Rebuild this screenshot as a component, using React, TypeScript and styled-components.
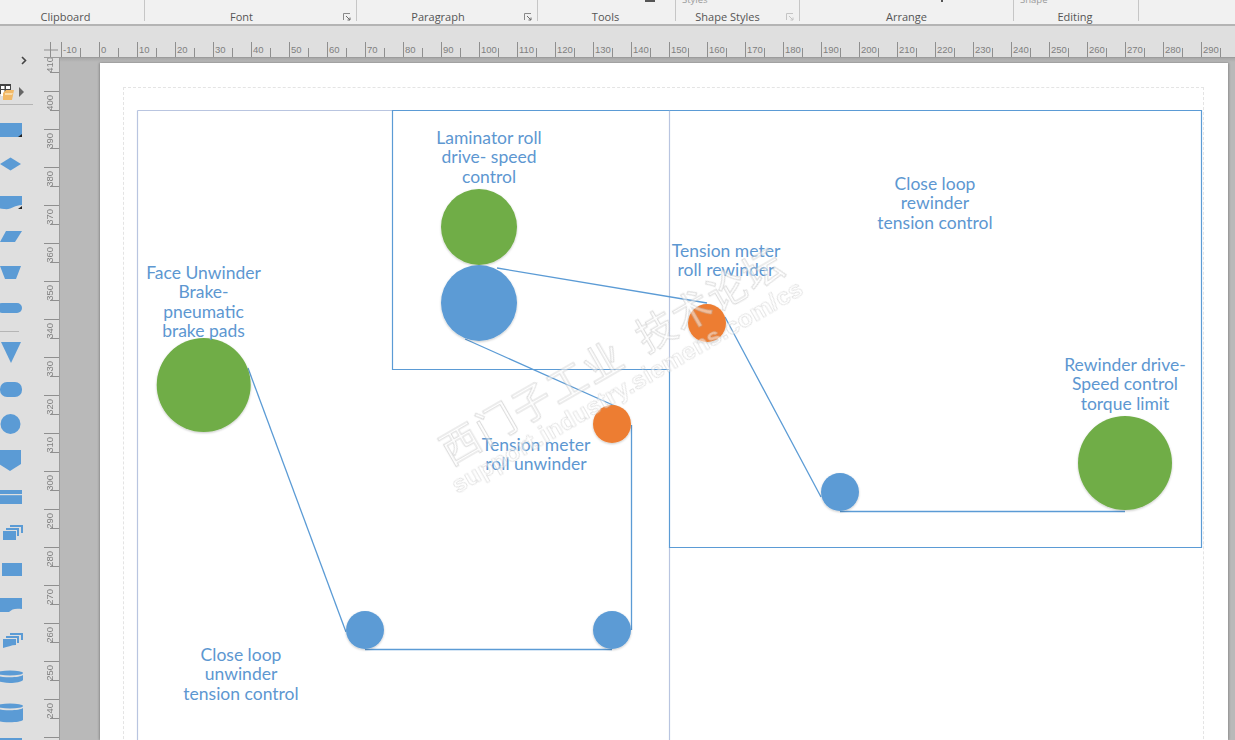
import React from "react";
import styled, { createGlobalStyle } from "styled-components";

const Global = createGlobalStyle`
  html, body { margin: 0; padding: 0; background: #dfdfdf; }
  body { width: 1235px; height: 740px; overflow: hidden; font-family: "Liberation Sans", Arial, sans-serif; }
`;

const Screen = styled.div`
  width: 1235px;
  height: 740px;
  display: flex;
  flex-direction: column;
  overflow: hidden;
`;

const Ribbon = styled.div`
  flex: none;
  height: 24px;
  display: flex;
  background: #f1f1f1;
  border-bottom: 2px solid #b4b4b4;
`;

const RibbonGroup = styled.div<{ $w: number; $pad: number }>`
  flex: none;
  box-sizing: border-box;
  width: ${(p) => p.$w}px;
  height: 21px;
  padding-right: ${(p) => p.$pad}px;
  position: relative;
  border-right: 1px solid #c6c6c6;
  text-align: center;
  font: 11px/34px "Open Sans", sans-serif;
  color: #555;
`;

const Launcher = styled.svg`
  position: absolute;
  right: 5px;
  bottom: 0;
`;

const CutOff = styled.span`
  position: absolute;
  left: 6px;
  top: -6px;
  font: 9.5px/12px "Open Sans", sans-serif;
  color: #9a9a9a;
`;

const Notch = styled.span<{ $right: number; $w: number }>`
  position: absolute;
  top: 0;
  right: ${(p) => p.$right}px;
  width: ${(p) => p.$w}px;
  height: 2px;
  background: #555;
`;

const Body = styled.div`
  flex: 1;
  min-height: 0;
  display: flex;
`;

const Palette = styled.div`
  flex: none;
  width: 44px;
  background: #dfdfdf;
  overflow: hidden;
`;

const PaletteTop = styled.div`
  height: 79px;
  box-sizing: border-box;
  padding-top: 30px;
  margin-right: 11px;
  border-bottom: 1px solid #b5b5b5;
`;

const Chevron = styled.svg`
  display: block;
  margin-left: 21px;
`;

const OpenIcon = styled.svg`
  display: block;
  margin-top: 19px;
`;

const PaletteList = styled.div`
  display: flex;
  flex-direction: column;
  padding-top: 9px;
`;

const PaletteItem = styled.svg<{ $h: number }>`
  display: block;
  flex: none;
  width: 44px;
  height: ${(p) => p.$h}px;
  overflow: visible;
  filter: blur(0.35px);
`;

const PaletteRule = styled.div`
  flex: none;
  width: 19px;
  height: 1px;
  background: #b5b5b5;
`;

const Main = styled.div`
  flex: 1;
  min-width: 0;
  display: flex;
  flex-direction: column;
`;

const RulerBand = styled.div`
  flex: none;
  height: 32px;
  box-sizing: border-box;
  padding-top: 16px;
  display: flex;
  background: #dfdfdf;
  border-bottom: 1px solid #9c9c9c;
`;

const RulerCorner = styled.svg`
  flex: none;
  display: block;
  width: 17px;
  height: 15px;
`;

const HCell = styled.div`
  flex: none;
  width: 38px;
  height: 15px;
  box-sizing: border-box;
  border-left: 1px solid #8f8f8f;
  position: relative;
  padding: 2px 0 0 1px;
  font: 9.5px/11px "Liberation Sans", sans-serif;
  color: #808080;
  &::after {
    content: "";
    position: absolute;
    left: 18px;
    bottom: 0;
    width: 1px;
    height: 9px;
    background: #8f8f8f;
  }
`;

const Work = styled.div`
  flex: 1;
  min-height: 0;
  display: flex;
`;

const VRuler = styled.div`
  flex: none;
  width: 15px;
  background: #dfdfdf;
  border-right: 1px solid #9c9c9c;
  overflow: hidden;
`;

const VCell = styled.div<{ $first?: boolean }>`
  width: 15px;
  height: 38px;
  box-sizing: border-box;
  border-top: 1px solid #8f8f8f;
  margin-top: ${(p) => (p.$first ? "-5px" : "0")};
  position: relative;
  &::after {
    content: "";
    position: absolute;
    right: 0;
    top: 18px;
    width: 9px;
    height: 1px;
    background: #8f8f8f;
  }
`;

const VLabel = styled.span`
  position: absolute;
  left: 0;
  top: 3px;
  writing-mode: vertical-rl;
  transform: rotate(180deg);
  font: 9.5px/11px "Liberation Sans", sans-serif;
  color: #808080;
`;

const Desk = styled.div`
  flex: 1;
  min-width: 0;
  box-sizing: border-box;
  padding: 5px 7px 0 40px;
  background: linear-gradient(180deg, #a8a8a8 0, #b9b9b9 4px);
`;

const Page = styled.div`
  height: 100%;
  position: relative;
  background: #fff;
  box-shadow: -1px 0 2px #8f8f8f, 1px 0 2px #8f8f8f;
  overflow: hidden;
`;

const Margin = styled.div`
  position: absolute;
  left: 23px;
  top: 24px;
  right: 24px;
  height: 700px;
  border: 1px dashed #e4e4e4;
`;

const Drawing = styled.svg`
  position: absolute;
  left: -1px;
  top: 0;
`;

const Label = styled.div<{ $cx: number; $top: number }>`
  position: absolute;
  left: ${(p) => p.$cx - 101}px;
  top: ${(p) => p.$top}px;
  width: 200px;
  text-align: center;
  white-space: pre-line;
  font: 17.5px/19.3px Lato, sans-serif;
  color: #5d97d1;
`;

const Watermark = styled.div`
  position: absolute;
  left: 331px;
  top: 369px;
  transform: rotate(-30deg);
  transform-origin: 0 0;
  white-space: nowrap;
  pointer-events: none;
  filter: blur(0.3px);
`;

const MarkTitle = styled.div`
  font: 400 39px/44px "Noto Sans CJK SC", sans-serif;
  letter-spacing: 2px;
  word-spacing: 10px;
  color: rgba(255, 255, 255, 0.5);
  -webkit-text-stroke: 1px rgba(175, 175, 175, 0.45);
`;

const MarkUrl = styled.div`
  margin: 1px 0 0 -8px;
  font: 700 24.5px/28px "Liberation Sans", sans-serif;
  letter-spacing: 0.4px;
  color: rgba(255, 255, 255, 0.5);
  -webkit-text-stroke: 0.7px rgba(175, 175, 175, 0.45);
`;

type Group = { w: number; pad: number; label: string; launcher?: boolean; cut?: string; off?: boolean; notch?: [number, number] };

const groups: Group[] = [
  { w: 145, pad: 13, label: "Clipboard" },
  { w: 212, pad: 18, label: "Font", launcher: true },
  { w: 181, pad: 18, label: "Paragraph", launcher: true },
  { w: 138, pad: 2, label: "Tools", notch: [20, 10] },
  { w: 124, pad: 20, label: "Shape Styles", launcher: true, cut: "Styles", off: true },
  { w: 214, pad: 0, label: "Arrange", notch: [70, 2] },
  { w: 125, pad: 2, label: "Editing", cut: "Shape" },
];

const BLUE = "#5b9bd5";
const hLabels = Array.from({ length: 31 }, (_, i) => (i - 1) * 10);
const vLabels = Array.from({ length: 19 }, (_, i) => 410 - i * 10);

// drawing coordinates: the drawing starts at 99,63 on screen
const outlines = [
  { d: "M38.5 47.5H570.5V306M38.5 47.5V700", c: "#b9c5e0" },
  { d: "M570.5 484V700", c: "#b9c5e0" },
  { d: "M570.5 306.5H293.5V47.5H570.5", c: BLUE },
  { d: "M570.5 306.5V484.5H1102.5V47.5H570.5", c: BLUE },
];

const wires = [
  "M149 305 L247 569",
  "M266 586.5 H513",
  "M532.5 362 V567",
  "M366 276 L516 343",
  "M398 205 L608 240",
  "M626 254 L722 434",
  "M741 448.5 H1026",
];

const circles = [
  { cx: 104.7, cy: 322, r: 47, c: "#70ad47" },
  { cx: 380, cy: 164, r: 38, c: "#70ad47" },
  { cx: 380, cy: 240, r: 38, c: BLUE },
  { cx: 1026, cy: 400, r: 47, c: "#70ad47" },
  { cx: 608, cy: 260, r: 19, c: "#ed7d31" },
  { cx: 513, cy: 361, r: 19, c: "#ed7d31" },
  { cx: 741, cy: 429, r: 19, c: BLUE },
  { cx: 266, cy: 567, r: 19, c: BLUE },
  { cx: 513, cy: 567, r: 19, c: BLUE },
];

const labels = [
  { cx: 104.5, top: 200, text: "Face Unwinder\nBrake-\npneumatic\nbrake pads" },
  { cx: 390, top: 65, text: "Laminator roll\ndrive- speed\ncontrol" },
  { cx: 627, top: 178, text: "Tension meter\nroll rewinder" },
  { cx: 836, top: 111, text: "Close loop\nrewinder\ntension control" },
  { cx: 1026, top: 292, text: "Rewinder drive-\nSpeed control\ntorque limit" },
  { cx: 437, top: 372, text: "Tension meter\nroll unwinder" },
  { cx: 142, top: 582, text: "Close loop\nunwinder\ntension control" },
];

// palette glyphs, x runs from the clipped left edge of the strip
const shapes: { h: number; d: React.ReactNode }[] = [
  { h: 36, d: <><path d="M-3 9H22V23H-3Z" fill={BLUE} /><path d="M22 20V23H18Z" fill="#222" /></> },
  { h: 36, d: <path d="M0 14L10.5 7.5L21 14L10.5 20.5Z" fill={BLUE} /> },
  { h: 36, d: <><path d="M-3 10H22V19C14 19 12 24 4 23C0 23 -1 22 -3 21Z" fill={BLUE} /><path d="M22 20V23H18Z" fill="#222" /></> },
  { h: 36, d: <path d="M6 9H22L15 20H0Z" fill={BLUE} /> },
  { h: 36, d: <path d="M0 8H21L16 21H5Z" fill={BLUE} /> },
  { h: 37, d: <rect x="-3" y="9" width="25" height="10" rx="5" fill={BLUE} /> },
];

const shapes2: { h: number; d: React.ReactNode }[] = [
  { h: 37, d: <path d="M1 10H21L11 31Z" fill={BLUE} /> },
  { h: 37, d: <rect x="0" y="13" width="22" height="15" rx="7" fill={BLUE} /> },
  { h: 36, d: <circle cx="10.5" cy="18" r="10" fill={BLUE} /> },
  { h: 36, d: <path d="M-1 8H21V22L10 29L-1 22Z" fill={BLUE} /> },
  { h: 36, d: <><rect x="-3" y="12" width="25" height="14" fill={BLUE} /><rect x="-3" y="16" width="25" height="1.2" fill="#dfdfdf" /></> },
  { h: 36, d: <><path d="M10 11H23V19H21V13H10Z" fill={BLUE} /><path d="M6 14H19V22H17V16H6Z" fill={BLUE} /><rect x="3" y="17" width="13" height="9" fill={BLUE} /></> },
  { h: 36, d: <rect x="2" y="13" width="20" height="13" fill={BLUE} /> },
  { h: 36, d: <path d="M-3 12H22V23C15 22 12 23 9 26H-3Z" fill={BLUE} /> },
  { h: 36, d: <><path d="M10 11H23V18H21V13H10Z" fill={BLUE} /><path d="M6 14H19V21H17V16H6Z" fill={BLUE} /><path d="M3 17H16V23C11 23 8 25 3 26Z" fill={BLUE} /></> },
  { h: 36, d: <><ellipse cx="10" cy="15" rx="13" ry="2.5" fill={BLUE} /><path d="M-3 17C0 20 20 20 23 17V22C20 26 0 26 -3 22Z" fill={BLUE} /></> },
  { h: 36, d: <><ellipse cx="10" cy="12" rx="13" ry="2.5" fill={BLUE} /><path d="M-3 14C0 17 20 17 23 14V26C20 29 0 29 -3 26Z" fill={BLUE} /></> },
  { h: 10, d: <rect x="-3" y="8" width="25" height="6" fill={BLUE} /> },
];

const App: React.FC = () => {
  return (
    <Screen>
      <Global />
      <Ribbon>
        {groups.map((g) => (
          <RibbonGroup key={g.label} $w={g.w} $pad={g.pad}>
            {g.cut && <CutOff>{g.cut}</CutOff>}
            {g.notch && <Notch $right={g.notch[0]} $w={g.notch[1]} />}
            {g.label}
            {g.launcher && (
              <Launcher width="8" height="8" viewBox="0 0 8 8">
                <path d="M0.5 7V0.5H7" fill="none" stroke={g.off ? "#c4c4c4" : "#8a8a8a"} />
                <path d="M3 3L7 7M7 4.5V7H4.5" fill="none" stroke={g.off ? "#c4c4c4" : "#6a6a6a"} />
              </Launcher>
            )}
          </RibbonGroup>
        ))}
      </Ribbon>
      <Body>
        <Palette>
          <PaletteTop>
            <Chevron width="6" height="9" viewBox="0 0 6 9">
              <path d="M1 1L4.5 4.5L1 8" fill="none" stroke="#444" strokeWidth="1.6" />
            </Chevron>
            <OpenIcon width="25" height="18" viewBox="0 0 25 18">
              <path d="M0 0H11V10H0Z" fill="#444" />
              <path d="M1 2H4.5V5H1ZM6 2H10V5H6ZM1 6H4.5V12H1Z" fill="#fff" />
              <path d="M3 9L6 6H14L12 16H3Z" fill="#f2b967" />
              <path d="M5 9H13L12 11H5Z" fill="#fbdca8" />
              <path d="M19 3L24 8L19 13Z" fill="#666" />
            </OpenIcon>
          </PaletteTop>
          <PaletteList>
            {shapes.map((s, i) => (
              <PaletteItem key={i} $h={s.h} viewBox={`0 0 44 ${s.h}`}>{s.d}</PaletteItem>
            ))}
            <PaletteRule />
            {shapes2.map((s, i) => (
              <PaletteItem key={i} $h={s.h} viewBox={`0 0 44 ${s.h}`}>{s.d}</PaletteItem>
            ))}
          </PaletteList>
        </Palette>
        <Main>
          <RulerBand>
            <RulerCorner viewBox="0 0 17 15">
              <path d="M0 8H14M6.5 0V15" stroke="#8f8f8f" fill="none" />
            </RulerCorner>
            {hLabels.map((n) => (
              <HCell key={n}>{n}</HCell>
            ))}
          </RulerBand>
          <Work>
            <VRuler>
              {vLabels.map((n, i) => (
                <VCell key={n} $first={i === 0}>
                  <VLabel>{n}</VLabel>
                </VCell>
              ))}
            </VRuler>
            <Desk>
              <Page>
                <Margin />
                <Drawing width="1129" height="677" viewBox="0 0 1129 677">
                  <defs>
                    <filter id="soft" x="-20%" y="-20%" width="140%" height="140%">
                      <feDropShadow dx="0" dy="1" stdDeviation="1.2" floodColor="#000" floodOpacity="0.22" />
                    </filter>
                  </defs>
                  {outlines.map((o) => (
                    <path key={o.d} d={o.d} fill="none" stroke={o.c} strokeWidth="1.2" />
                  ))}
                  {wires.map((d) => (
                    <path key={d} d={d} fill="none" stroke={BLUE} strokeWidth="1.3" />
                  ))}
                  {circles.map((c) => (
                    <circle key={`${c.cx}-${c.cy}`} cx={c.cx} cy={c.cy} r={c.r} fill={c.c} filter="url(#soft)" />
                  ))}
                </Drawing>
                {labels.map((l) => (
                  <Label key={l.text} $cx={l.cx} $top={l.top}>{l.text}</Label>
                ))}
                <Watermark>
                  <MarkTitle>西门子工业 技术论坛</MarkTitle>
                  <MarkUrl>support.industry.siemens.com/cs</MarkUrl>
                </Watermark>
              </Page>
            </Desk>
          </Work>
        </Main>
      </Body>
    </Screen>
  );
};

export default App;
